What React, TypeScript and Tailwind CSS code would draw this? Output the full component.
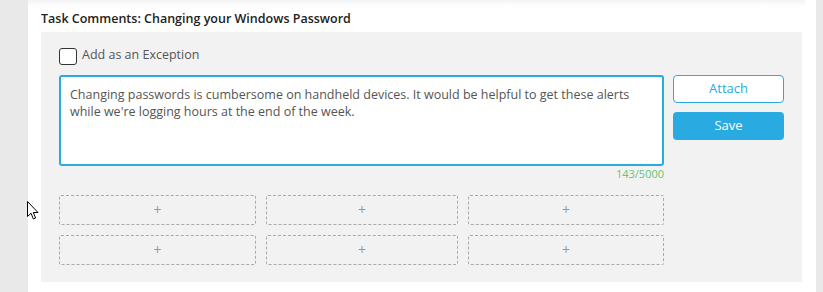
const SLOTS = [0, 1, 2, 3, 4, 5];

function Cursor() {
  return (
    <svg className="absolute left-[27px] top-[201px]" width="13" height="19" viewBox="0 0 13 19">
      <path
        d="M0.5 0.5 L0.5 15.5 L4 12.2 L6.4 18 L8.6 17 L6.3 11.5 L11 11.5 Z"
        fill="#fff"
        stroke="#000"
        strokeWidth="1"
        strokeLinejoin="miter"
      />
    </svg>
  );
}

export default function App() {
  const comment =
    "Changing passwords is cumbersome on handheld devices. It would be helpful to get these alerts while we're logging hours at the end of the week.";

  return (
    <div
      className="relative flex h-[292px] w-[823px] bg-[#e9e9e9] text-[12.5px] text-[#555]"
      style={{ fontFamily: '"Open Sans", "Liberation Sans", sans-serif' }}
    >
      <div className="ml-[28px] w-[788px] bg-white">
        <div className="h-[6px] w-[777px] bg-gradient-to-b from-[#f3f3f3] to-white" />
        <h2 className="ml-[13px] mt-[4px] text-[12.5px] font-semibold leading-[18px] text-[#222]">
          Task Comments: Changing your Windows Password
        </h2>
        <div className="ml-[13px] mt-[4px] h-[250px] w-[761px] bg-[#f2f2f2] px-[18px] pt-[16px]">
          <label className="flex items-start gap-[5px]">
            <span className="h-[17px] w-[18px] rounded-[3px] border-[1.5px] border-[#333] bg-white" />
            <span className="-mt-[2px] text-[12.5px] leading-[18px] text-[#555]">Add as an Exception</span>
          </label>
          <div className="mt-[10px] flex items-start gap-[9px]">
            <div className="w-[605px]">
              <textarea
                readOnly
                value={comment}
                className="block h-[91px] w-full resize-none rounded-[3px] border-2 border-[#29abe2] bg-white px-[9px] pt-[9px] text-[12.5px] leading-[17px] text-[#555] outline-none"
              />
              <div className="mt-[2px] text-right text-[11px] leading-[12px] text-[#66c27c]">143/5000</div>
            </div>
            <div className="flex w-[111px] flex-col gap-[9px]">
              <button className="h-[28px] rounded-[4px] border border-[#29abe2] bg-white text-[13px] text-[#29abe2]">
                Attach
              </button>
              <button className="h-[28px] rounded-[4px] bg-[#29abe2] text-[13px] text-white">Save</button>
            </div>
          </div>
          <div className="mt-[15px] grid w-[605px] grid-cols-[197px_192px_196px] gap-[10px]">
            {SLOTS.map((i) => (
              <div
                key={i}
                className="flex h-[30px] items-center justify-center rounded-[2px] border border-dashed border-[#aaa] text-[14px] leading-none text-[#999]"
              >
                +
              </div>
            ))}
          </div>
        </div>
      </div>
      <Cursor />
    </div>
  );
}
